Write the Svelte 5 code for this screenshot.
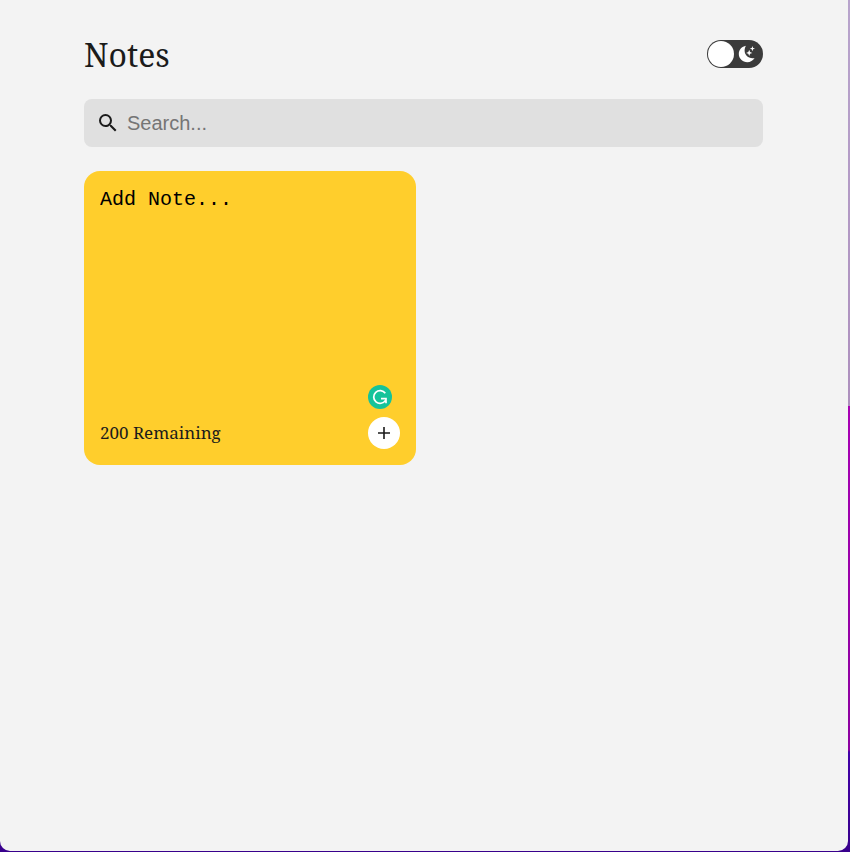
<script>
  const limit = 200;
  let dark = $state(false);
  let search = $state('');
  let draft = $state('');
  let notes = $state([]);

  let remaining = $derived(limit - draft.length);
  let visible = $derived(notes.filter((n) => n.toLowerCase().includes(search.toLowerCase())));

  function addNote() {
    if (draft.trim()) {
      notes.push(draft.trim());
      draft = '';
    }
  }
</script>

<div class="desktop">
  <main class="window" class:dark>
    <header>
      <h1>Notes</h1>
      <label class="toggle">
        <input type="checkbox" bind:checked={dark} aria-label="Dark mode" />
        <span class="knob"></span>
        <svg viewBox="0 0 18 18" aria-hidden="true">
          <path d="M8 .8C6.200 3.500 6.100 7.800 8.400 10.500c2.100 2.500 5.400 3.100 8.200 2.500C15 15.700 12.400 17.200 9.300 17.200 4.600 17.200.8 13.500.8 9 .8 4.900 3.800 1.500 8 .8z" />
          <path d="M14.400 1l.7 1.900 1.900.7-1.900.7-.7 1.900-.7-1.900-1.900-.7 1.900-.7z" />
          <path d="M11.200 4.800l.9 2.200 2.200.9-2.200.9-.9 2.200-.9-2.200-2.200-.9 2.200-.9z" />
        </svg>
      </label>
    </header>

    <label class="search">
      <svg viewBox="0 0 24 24" aria-hidden="true">
        <path d="M15.500 14h-.79l-.28-.27A6.471 6.471 0 0 0 16 9.500 6.500 6.500 0 1 0 9.500 16c1.610 0 3.090-.59 4.230-1.570l.27.28v.79l5 4.990L20.490 19l-4.990-5zm-6 0C7.010 14 5 11.990 5 9.500S7.010 5 9.500 5 14 7.010 14 9.500 11.990 14 9.500 14z" />
      </svg>
      <input type="text" placeholder="Search..." aria-label="Search notes" bind:value={search} />
    </label>

    <section class="grid">
      {#each visible as note}
        <article class="note"><p>{note}</p></article>
      {/each}
      <article class="note">
        <div class="editor">
          <textarea placeholder="Add Note..." aria-label="New note" maxlength={limit} bind:value={draft}></textarea>
          <button class="assistant" type="button" aria-label="Check writing">
            <svg viewBox="0 0 24 24" aria-hidden="true">
              <path d="M17.300 8.200A6.400 6.400 0 1 0 17.500 15.400M13 13.600h5v4.600" />
            </svg>
          </button>
        </div>
        <footer>
          <span>{remaining} Remaining</span>
          <button class="add" type="button" aria-label="Add note" onclick={addNote}>
            <svg viewBox="0 0 32 32" aria-hidden="true"><path d="M16 10v12M10 16h12" /></svg>
          </button>
        </footer>
      </article>
    </section>
  </main>
</div>

<style>
  :global(body) {
    margin: 0;
  }
  .desktop {
    box-sizing: border-box;
    display: flex;
    min-height: 100vh;
    padding: 0 2px 1px 0;
    background: linear-gradient(#b8a4cc, #ad8fbd 406px, #a800b4 406px, #8c00a0 750px, #4200a8 752px, #38008c);
  }
  .window {
    box-sizing: border-box;
    flex: 1;
    min-width: 0;
    padding: 32px 85px 32px 84px;
    border-radius: 0 0 10px 10px;
    background: #f3f3f3;
    color: #1b1b1b;
    font-family: "Droid Serif", "Noto Serif", "DejaVu Serif Condensed", "Liberation Serif", serif;
  }
  .window.dark {
    background: #222;
  }
  .dark h1 {
    color: #fff;
  }
  header {
    display: flex;
    align-items: center;
    justify-content: space-between;
    height: 44px;
    margin-bottom: 23px;
  }
  h1 {
    margin: 0;
    padding-top: 2px;
    font-size: 32px;
    line-height: 44px;
    font-weight: 400;
  }
  .toggle {
    box-sizing: border-box;
    display: flex;
    align-items: center;
    justify-content: space-between;
    width: 56px;
    height: 28px;
    padding: 0 7px 0 1px;
    border-radius: 14px;
    background: #3b3b3b;
    cursor: pointer;
  }
  .toggle input {
    position: absolute;
    opacity: 0;
    margin: 0;
  }
  .knob {
    width: 26px;
    height: 26px;
    border-radius: 50%;
    background: #fff;
  }
  .toggle svg {
    width: 18px;
    height: 18px;
    fill: #fff;
  }
  .toggle:has(input:checked) {
    flex-direction: row-reverse;
    padding: 0 1px 0 7px;
  }
  .search {
    display: flex;
    align-items: center;
    gap: 7px;
    height: 48px;
    margin-bottom: 24px;
    padding: 0 12px;
    border-radius: 8px;
    background: #e0e0e0;
  }
  .search svg {
    width: 24px;
    height: 24px;
    fill: #1b1b1b;
  }
  .search input {
    flex: 1;
    min-width: 0;
    padding: 0;
    border: 0;
    outline: 0;
    background: none;
    font: 20px "Liberation Sans", Arial, sans-serif;
  }
  .search input::placeholder {
    color: #757575;
  }
  .grid {
    display: grid;
    grid-template-columns: repeat(auto-fill, minmax(280px, 1fr));
    gap: 15px;
  }
  .note {
    display: flex;
    flex-direction: column;
    padding: 16px;
    border-radius: 16px;
    background: #ffce2c;
  }
  .note p {
    margin: 0;
  }
  .editor {
    position: relative;
    display: flex;
  }
  textarea {
    flex: 1;
    min-width: 0;
    height: 230px;
    box-sizing: border-box;
    padding: 0;
    border: 0;
    outline: 0;
    resize: none;
    background: none;
    color: #000;
    font: 20px/26px "Courier New", "Liberation Mono", monospace;
  }
  textarea::placeholder {
    color: #000;
    opacity: 1;
  }
  button {
    padding: 0;
    border: 0;
    border-radius: 50%;
    cursor: pointer;
  }
  button svg {
    display: block;
    fill: none;
  }
  .assistant {
    position: absolute;
    right: 8px;
    bottom: 8px;
    width: 24px;
    height: 24px;
    background: #15c39a;
  }
  .assistant svg {
    stroke: #fff;
    stroke-width: 1.700;
  }
  footer {
    display: flex;
    align-items: center;
    justify-content: space-between;
    font-size: 17px;
    line-height: 24px;
  }
  .add {
    width: 32px;
    height: 32px;
    background: #fff;
  }
  .add svg {
    stroke: #1b1b1b;
    stroke-width: 1.600;
  }
</style>
